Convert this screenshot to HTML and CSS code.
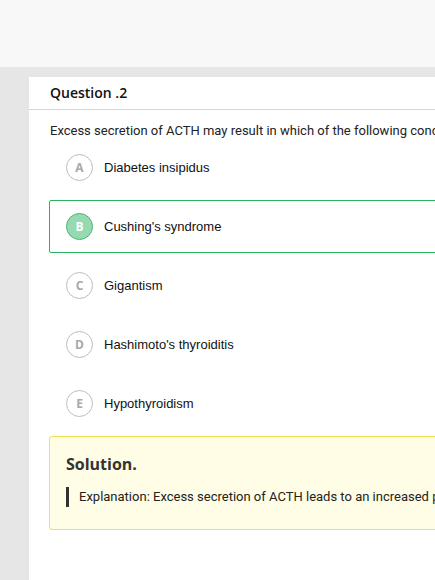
FILE: index.html
```html
<!DOCTYPE html>
<html lang="en">

<head>
    <meta charset="UTF-8">
    <meta name="viewport" content="width=device-width, initial-scale=1.0">
    <title>Question 2</title>
    <link rel="stylesheet" href="styles.css">
</head>

<body>
    <div class="topbar"></div>

    <div class="page">
        <div class="card">
            <div class="card-head">Question .2</div>
            <div class="card-body">
                <p class="question">Excess secretion of ACTH may result in which of the following conditions?</p>

                <div class="option">
                    <span class="letter">A</span>
                    <span class="label">Diabetes insipidus</span>
                </div>
                <div class="option correct">
                    <span class="letter">B</span>
                    <span class="label">Cushing's syndrome</span>
                </div>
                <div class="option">
                    <span class="letter">C</span>
                    <span class="label">Gigantism</span>
                </div>
                <div class="option">
                    <span class="letter">D</span>
                    <span class="label">Hashimoto's thyroiditis</span>
                </div>
                <div class="option">
                    <span class="letter">E</span>
                    <span class="label">Hypothyroidism</span>
                </div>

                <div class="solution">
                    <h3>Solution.</h3>
                    <blockquote>Explanation: Excess secretion of ACTH leads to an increased production of cortisol by the adrenal cortex.</blockquote>
                </div>
            </div>
        </div>
    </div>
</body>

</html>
```

FILE: styles.css
```css
html,
body {
    margin: 0;
    height: 100%;
}

body {
    background-color: #e6e6e6;
    overflow: hidden;
    font-family: Roboto, "Liberation Sans", sans-serif;
    color: #222;
}

.topbar {
    height: 67px;
    background-color: #f8f8f8;
}

.page {
    padding: 10px 0 0 29px;
}

.card {
    width: 1000px;
    height: 520px;
    background: #fff;
}

.card-head {
    height: 32px;
    line-height: 32px;
    padding: 0 21px;
    border-bottom: 1px solid #d6d6d6;
    font-family: "Open Sans", sans-serif;
    font-size: 14px;
    font-weight: 600;
    color: #111;
}

.card-body {
    padding: 0 20px;
}

.question {
    margin: 12px 0 1px 1px;
    font-size: 13px;
    line-height: 18px;
    white-space: nowrap;
}

.option {
    display: flex;
    align-items: center;
    gap: 11px;
    height: 51px;
    padding-left: 16px;
    margin-bottom: 6px;
    border: 1px solid transparent;
    border-radius: 2px;
}

.option.correct {
    border-color: #2bb35c;
}

.letter {
    width: 25px;
    height: 25px;
    border: 1px solid #bdbdbd;
    border-radius: 50%;
    display: flex;
    justify-content: center;
    align-items: center;
    font-family: "Open Sans", sans-serif;
    font-size: 12px;
    font-weight: 700;
    color: #a8a8a8;
}

.correct .letter {
    background-color: #97d9b0;
    border-color: #45b874;
    color: #fff;
}

.label {
    font-family: "Liberation Sans", Arial, sans-serif;
    font-size: 13px;
    color: #111;
}

.solution {
    border: 1px solid #f1e34f;
    border-radius: 3px;
    background-color: #fffde5;
    padding: 16px 16px 22px;
}

.solution h3 {
    margin: 0 0 12px;
    font-family: "Open Sans", sans-serif;
    font-size: 16px;
    font-weight: 700;
    line-height: 22px;
    color: #333;
}

.solution blockquote {
    margin: 0;
    padding-left: 10px;
    border-left: 3px solid #333;
    font-size: 13px;
    line-height: 20px;
    white-space: nowrap;
}
```
